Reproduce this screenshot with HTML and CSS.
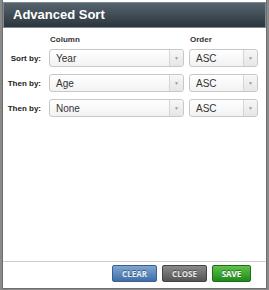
FILE: index.html
```html
<!DOCTYPE html>
<html lang="en">
<head>
  <meta charset="UTF-8" />
  <title>Advanced Sort</title>
  <link rel="stylesheet" href="styles.css">
</head>
<body>
  <div class="dialog">
    <div class="dialog-header">Advanced Sort</div>
    <div class="dialog-body">
      <div class="sort-grid">
        <div></div>
        <div class="col-head">Column</div>
        <div class="col-head">Order</div>

        <div class="row-label">Sort by:</div>
        <div class="select"><span>Year</span><span class="arrow">&#9660;</span></div>
        <div class="select"><span>ASC</span><span class="arrow">&#9660;</span></div>

        <div class="row-label">Then by:</div>
        <div class="select"><span>Age</span><span class="arrow">&#9660;</span></div>
        <div class="select"><span>ASC</span><span class="arrow">&#9660;</span></div>

        <div class="row-label">Then by:</div>
        <div class="select"><span>None</span><span class="arrow">&#9660;</span></div>
        <div class="select"><span>ASC</span><span class="arrow">&#9660;</span></div>
      </div>
    </div>
    <div class="dialog-footer">
      <button class="btn btn-clear">CLEAR</button>
      <button class="btn btn-close">CLOSE</button>
      <button class="btn btn-save">SAVE</button>
    </div>
  </div>
</body>
</html>
```

FILE: styles.css
```css
html, body {
  margin: 0;
  height: 290px;
  overflow: hidden;
}

body {
  background-color: #8a8a8a;
  font-family: 'Liberation Sans', Arial, sans-serif;
  padding: 0 2px 0 2px;
  box-sizing: border-box;
}

.dialog {
  height: 289px;
  background: #fff;
  border: 1px solid #6e6e6e;
  border-top: none;
  box-sizing: border-box;
  display: flex;
  flex-direction: column;
}

.dialog-header {
  margin-top: 2px;
  height: 26px;
  box-sizing: border-box;
  background: linear-gradient(to bottom, #56646f, #2b353c);
  border: 1px solid #7d8a93;
  color: #fff;
  font-weight: bold;
  font-size: 13px;
  line-height: 24px;
  padding-left: 9px;
}

.dialog-body {
  flex: 1;
  padding: 7px 0 0 0;
}

.sort-grid {
  display: grid;
  grid-template-columns: 38px 135px 66px;
  column-gap: 8px;
  row-gap: 7px;
  align-items: center;
}

.sort-grid > div:nth-child(3) {
  margin-left: -3px;
}

.col-head {
  font-size: 8px;
  font-weight: bold;
  color: #333;
  padding-left: 1px;
  margin-bottom: -2px;
}

.row-label {
  font-size: 8px;
  font-weight: bold;
  color: #222;
  text-align: right;
}

.select {
  height: 18px;
  box-sizing: border-box;
  border: 1px solid #c8c8c8;
  border-radius: 3px;
  background: linear-gradient(to bottom, #ffffff, #f2f2f2);
  display: flex;
  align-items: center;
  font-size: 10px;
  color: #333;
  padding-left: 6px;
}

.select:nth-child(3n) {
  margin-left: -3px;
}

.select span:first-child {
  flex: 1;
}

.arrow {
  width: 13px;
  height: 100%;
  border-left: 1px solid #d6d6d6;
  font-size: 5px;
  color: #999;
  display: flex;
  align-items: center;
  justify-content: center;
  background: linear-gradient(to bottom, #f7f7f7, #e6e6e6);
  border-radius: 0 3px 3px 0;
}

.dialog-footer {
  border-top: 1px solid #cfcfcf;
  display: flex;
  justify-content: flex-end;
  gap: 5px;
  padding: 3px 15px 6px 0;
}

.btn {
  height: 17px;
  border-radius: 2px;
  font-family: 'Open Sans', 'Liberation Sans', sans-serif;
  font-weight: bold;
  font-size: 8px;
  color: #fff;
  text-shadow: 0 -1px 0 rgba(0, 0, 0, 0.4);
  padding: 0;
  cursor: pointer;
}

.btn-clear {
  width: 45px;
  background: linear-gradient(to bottom, #7fa7d3, #3f6ea6);
  border: 1px solid #3a5f8e;
  color: #e8eef8;
}

.btn-close {
  width: 45px;
  background: linear-gradient(to bottom, #8a8a8a, #555);
  border: 1px solid #444;
  color: #e6e6e6;
}

.btn-save {
  width: 39px;
  background: linear-gradient(to bottom, #5fc24c, #1f8a1a);
  border: 1px solid #1d6e17;
}
```
